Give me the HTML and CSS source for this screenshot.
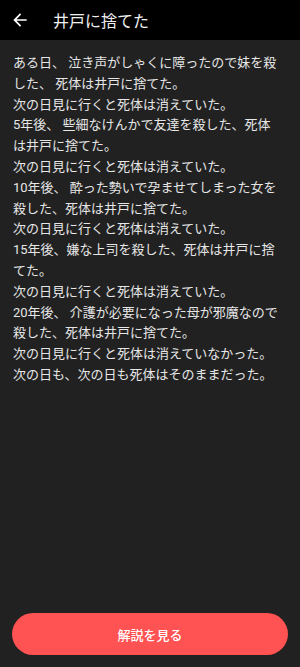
FILE: index.html
```html
<!DOCTYPE html>
<html lang="ja">
  <head>
    <meta charset="UTF-8" />
    <meta name="viewport" content="width=device-width, initial-scale=1.0" />
    <title>井戸に捨てた</title>
    <link rel="stylesheet" href="styles.css">
  </head>
  <body>
    <div class="screen">
      <header class="appBar">
        <span class="back">
          <svg width="20" height="20" viewBox="0 0 24 24">
            <path d="M20 11H7.83l5.59-5.59L12 4l-8 8 8 8 1.41-1.41L7.83 13H20v-2z" fill="#ffffff" />
          </svg>
        </span>
        <span class="title">井戸に捨てた</span>
      </header>
      <main class="story">
        <p>ある日、 泣き声がしゃくに障ったので妹を殺した、 死体は井戸に捨てた。</p>
        <p>次の日見に行くと死体は消えていた。</p>
        <p>5年後、 些細なけんかで友達を殺した、死体は井戸に捨てた。</p>
        <p>次の日見に行くと死体は消えていた。</p>
        <p>10年後、 酔った勢いで孕ませてしまった女を殺した、死体は井戸に捨てた。</p>
        <p>次の日見に行くと死体は消えていた。</p>
        <p>15年後、嫌な上司を殺した、死体は井戸に捨てた。</p>
        <p>次の日見に行くと死体は消えていた。</p>
        <p>20年後、 介護が必要になった母が邪魔なので殺した、死体は井戸に捨てた。</p>
        <p>次の日見に行くと死体は消えていなかった。</p>
        <p>次の日も、次の日も死体はそのままだった。</p>
      </main>
      <div class="footer">
        <a class="answerButton">解説を見る</a>
      </div>
    </div>
  </body>
</html>
```

FILE: styles.css
```css
html,
body {
  margin: 0;
  padding: 0;
  height: 100%;
  background-color: #212121;
  font-family: Roboto, "Noto Sans CJK JP", sans-serif;
}

.screen {
  display: flex;
  flex-direction: column;
  height: 100%;
}

.appBar {
  display: flex;
  align-items: center;
  height: 40px;
  background-color: #000000;
  color: #ffffff;
  flex-shrink: 0;
}
.back {
  display: flex;
  width: 20px;
  margin-left: 10px;
  margin-right: 23px;
}
.title {
  font-size: 16px;
  color: #f0f0f0;
}

.story {
  flex: 1;
  padding: 13px 20px 0 13px;
  color: #e6e6e6;
  font-size: 13px;
  line-height: 1.6;
}
.story p {
  margin: 0;
}

.footer {
  padding: 0 12px 12px;
}
.answerButton {
  display: flex;
  align-items: center;
  justify-content: center;
  height: 42px;
  border-radius: 21px;
  background-color: #ff5252;
  color: #ffffff;
  font-size: 13px;
  font-weight: 500;
  text-decoration: none;
}
```
